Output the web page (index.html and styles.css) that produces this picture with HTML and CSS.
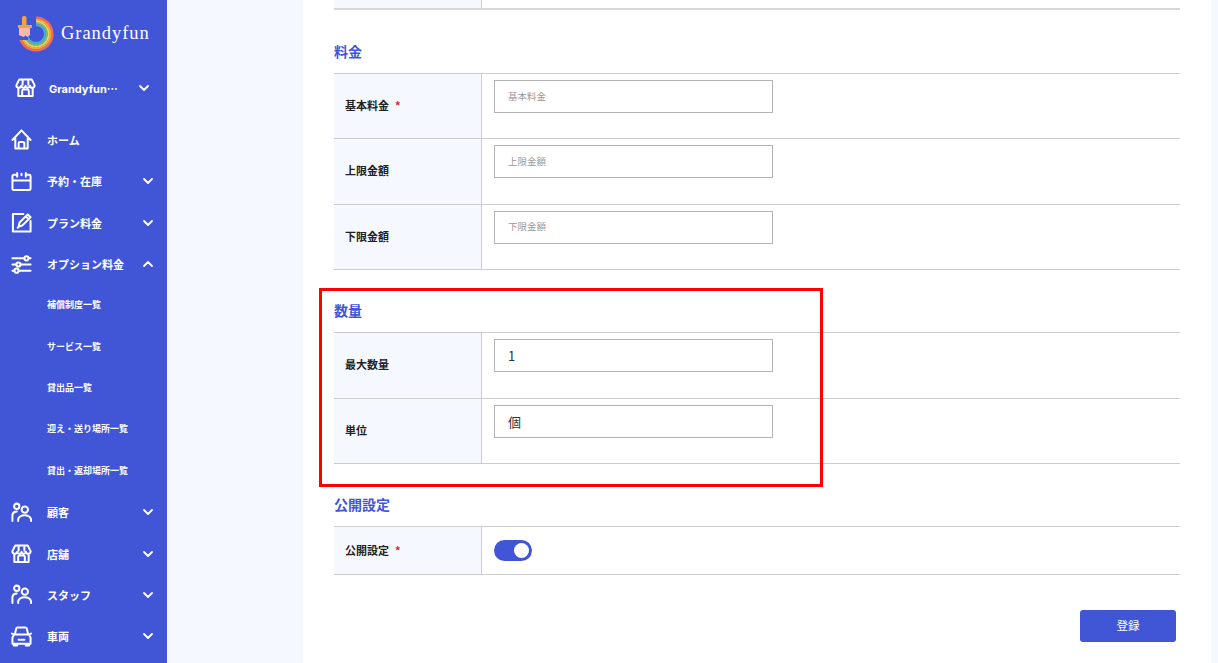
FILE: index.html
```html
<!DOCTYPE html>
<html lang="ja">
<head>
<meta charset="utf-8">
<title>Grandyfun</title>
<link rel="stylesheet" href="styles.css">
</head>
<body>
<svg class="defs" width="0" height="0" aria-hidden="true">
  <symbol id="i-store" viewBox="0 0 22 22"><path d="M4.500 2.500h13l3 6a2.400 2.400 0 0 1-4.800.8 2.400 2.400 0 0 1-4.700 0 2.400 2.400 0 0 1-4.700 0 2.400 2.400 0 0 1-4.800-.8zM3.500 11.500v8.500h15v-8.500M7.500 20v-5.500a1.500 1.500 0 0 1 1.500-1.500h4a1.500 1.500 0 0 1 1.500 1.500V20M8 3v5M14 3v5"/></symbol>
  <symbol id="i-home" viewBox="0 0 22 22"><path d="M1.500 11.500 11 1.500l9.500 10M4.500 9.500V20.500h13V9.500M8 20.500v-5.500a1.500 1.500 0 0 1 1.500-1.500h3a1.500 1.500 0 0 1 1.500 1.500v5.500"/></symbol>
  <symbol id="i-cal" viewBox="0 0 22 22"><path d="M6.500 4H3a1.500 1.500 0 0 0-1.500 1.500v13A1.500 1.500 0 0 0 3 20h16a1.500 1.500 0 0 0 1.500-1.500v-13A1.500 1.500 0 0 0 19 4h-3.500M6.500 2v4M15.500 2v4M11 3v1.500M1.500 10h19"/></symbol>
  <symbol id="i-edit" viewBox="0 0 22 22"><path d="M13 2H2v18.500h18.500V9.500M8 15.500l1-4.500 8.500-8.500 3 3-8.500 8.500zM8 15.500l-1 1M15.500 4.500l3 3"/></symbol>
  <symbol id="i-sliders" viewBox="0 0 22 22"><path d="M1.500 4.500h12.500M18.500 4.500h2M1.500 11h4M10 11h10.500M1.500 17.500h2M8 17.500h12.500"/><circle cx="16.200" cy="4.500" r="2.200"/><circle cx="7.800" cy="11" r="2.200"/><circle cx="5.800" cy="17.500" r="2.200"/></symbol>
  <symbol id="i-people" viewBox="0 0 22 22"><circle cx="6" cy="4.500" r="2.800"/><circle cx="14.500" cy="8" r="3.300"/><path d="M1.500 20v-6.500a4.500 4.500 0 0 1 4.500-3.500M7.500 20v-2a7 5.500 0 0 1 13.500 0V20"/></symbol>
  <symbol id="i-car" viewBox="0 0 22 22"><path d="M4 9 5.500 2.500A1.500 1.500 0 0 1 7 1.500h8a1.500 1.500 0 0 1 1.500 1L18 9M1 8l3 1h14l3-1M3 9.500 1.500 12v6.500h19V12L19 9.500M3 18.500v2h3.500v-2M15.500 18.500v2H19v-2M8 14.500h1M10.500 14.500h1M13 14.500h1"/></symbol>
  <symbol id="i-down" viewBox="0 0 10 6"><path d="M1 1l4 4 4-4"/></symbol>
  <symbol id="i-up" viewBox="0 0 10 6"><path d="M1 5l4-4 4 4"/></symbol>
</svg>

<div class="app">
  <aside class="sidebar">
    <div class="brand">
      <svg class="brand-logo" viewBox="0 0 40 40" width="40" height="40" fill="none" aria-hidden="true">
        <circle cx="20" cy="20" r="16.400" stroke="#ef6a5a" stroke-width="2.400"/>
        <circle cx="20" cy="20" r="14.300" stroke="#f7a63f" stroke-width="2"/>
        <circle cx="20" cy="20" r="12.500" stroke="#f3d648" stroke-width="1.800"/>
        <circle cx="20" cy="20" r="10.800" stroke="#7cbf6a" stroke-width="1.800"/>
        <circle cx="20" cy="20" r="9" stroke="#4aa9e0" stroke-width="2"/>
        <path d="M0 0h20v18H12V26H0z" fill="#4056d6"/>
        <rect x="6" y="2" width="4.500" height="10" rx="1.800" fill="#f0a23c"/>
        <rect x="2" y="11" width="14" height="3" fill="#f0a23c"/>
        <path d="M3 14h11v7l-2.500 2-2-1.500-2 1.500-4.500-2z" fill="#f8b9ab"/>
      </svg>
      <span class="brand-name">Grandyfun</span>
    </div>

    <div class="store-select">
      <svg class="icon"><use href="#i-store"/></svg>
      <span class="store-name">Grandyfun<span class="dots">⋯</span></span>
      <svg class="chev"><use href="#i-down"/></svg>
    </div>

    <nav class="nav">
      <a class="nav-item"><svg class="icon"><use href="#i-home"/></svg><span>ホーム</span></a>
      <a class="nav-item"><svg class="icon"><use href="#i-cal"/></svg><span>予約・在庫</span><svg class="chev"><use href="#i-down"/></svg></a>
      <a class="nav-item"><svg class="icon"><use href="#i-edit"/></svg><span>プラン料金</span><svg class="chev"><use href="#i-down"/></svg></a>
      <a class="nav-item"><svg class="icon"><use href="#i-sliders"/></svg><span>オプション料金</span><svg class="chev"><use href="#i-up"/></svg></a>
      <a class="nav-item nav-sub"><span>補償制度一覧</span></a>
      <a class="nav-item nav-sub"><span>サービス一覧</span></a>
      <a class="nav-item nav-sub"><span>貸出品一覧</span></a>
      <a class="nav-item nav-sub"><span>迎え・送り場所一覧</span></a>
      <a class="nav-item nav-sub"><span>貸出・返却場所一覧</span></a>
      <a class="nav-item"><svg class="icon"><use href="#i-people"/></svg><span>顧客</span><svg class="chev"><use href="#i-down"/></svg></a>
      <a class="nav-item"><svg class="icon"><use href="#i-store"/></svg><span>店舗</span><svg class="chev"><use href="#i-down"/></svg></a>
      <a class="nav-item"><svg class="icon"><use href="#i-people"/></svg><span>スタッフ</span><svg class="chev"><use href="#i-down"/></svg></a>
      <a class="nav-item"><svg class="icon"><use href="#i-car"/></svg><span>車両</span><svg class="chev"><use href="#i-down"/></svg></a>
    </nav>
  </aside>

  <main class="main">
    <div class="panel">
      <div class="form-table form-table-cut">
        <div class="row row-cut"><div class="label"></div><div class="field"></div></div>
      </div>

      <section class="section">
        <h2 class="section-title">料金</h2>
        <div class="form-table">
          <div class="row"><div class="label">基本料金<span class="req">*</span></div><div class="field"><input class="input input-empty" placeholder="基本料金"></div></div>
          <div class="row"><div class="label">上限金額</div><div class="field"><input class="input input-empty" placeholder="上限金額"></div></div>
          <div class="row"><div class="label">下限金額</div><div class="field"><input class="input input-empty" placeholder="下限金額"></div></div>
        </div>
      </section>

      <section class="section">
        <h2 class="section-title">数量</h2>
        <div class="form-table">
          <div class="row"><div class="label">最大数量</div><div class="field"><input class="input" value="1"></div></div>
          <div class="row"><div class="label">単位</div><div class="field"><input class="input" value="個"></div></div>
        </div>
      </section>

      <section class="section">
        <h2 class="section-title">公開設定</h2>
        <div class="form-table">
          <div class="row row-short"><div class="label">公開設定<span class="req">*</span></div><div class="field field-center"><span class="toggle"><span class="knob"></span></span></div></div>
        </div>
      </section>

      <div class="actions"><button class="btn" type="button">登録</button></div>

      <div class="highlight"></div>
    </div>
  </main>
</div>
</body>
</html>
```

FILE: styles.css
```css
* { box-sizing: border-box; }

html, body {
  margin: 0;
  height: 100%;
  overflow: hidden;
}

body {
  background: #f5f8ff;
  color: #222;
  font-family: "Noto Sans CJK JP", "Noto Sans", sans-serif;
}

.defs { position: absolute; }

.app {
  display: flex;
  height: 663px;
}

/* Sidebar */
.sidebar {
  flex: 0 0 167px;
  background: #4056d6;
  color: #fff;
}

.brand {
  display: flex;
  align-items: flex-start;
  gap: 5px;
  height: 67px;
  padding: 14px 0 0 16px;
}

.brand-logo { flex: none; }

.brand-name {
  margin-top: 7px;
  font-family: "Liberation Serif", serif;
  font-size: 18.500px;
  line-height: 24px;
  letter-spacing: 0.950px;
}

.store-select {
  display: flex;
  align-items: center;
  height: 41px;
  padding: 0 18px 0 15px;
  margin-bottom: 11.300px;
}

.store-select .icon { margin-right: 13px; }

.store-name {
  font-family: Inter, "Noto Sans", sans-serif;
  font-size: 11px;
  font-weight: 700;
}

.dots { font-family: "Noto Sans CJK JP", sans-serif; }

.store-select .chev { margin-left: auto; }

.nav { display: block; }

.nav-item {
  display: flex;
  align-items: center;
  height: 41.360px;
  padding: 0 14px 0 11px;
  font-size: 11px;
  font-weight: 700;
  line-height: 16px;
}

.nav-sub {
  padding-left: 47px;
  font-size: 9px;
}

.icon {
  flex: none;
  width: 21px;
  height: 21px;
  margin-right: 15px;
  fill: none;
  stroke: #fff;
  stroke-width: 2.100;
  stroke-linecap: round;
  stroke-linejoin: round;
}

.chev {
  flex: none;
  width: 10px;
  height: 6px;
  margin-left: auto;
  fill: none;
  stroke: #fff;
  stroke-width: 1.800;
  stroke-linecap: round;
  stroke-linejoin: round;
}

/* Main */
.main {
  flex: 1;
  min-width: 0;
  padding: 0 7px 0 136px;
}

.panel {
  position: relative;
  height: 663px;
  background: #fff;
  padding: 0 31px;
}

.form-table { border-top: 1px solid #ccc; }

.form-table-cut { border-top: 0; }

.row {
  display: grid;
  grid-template-columns: 148px 1fr;
  height: 65.330px;
  border-bottom: 1px solid #ccc;
}

.row-cut {
  height: 10px;
  border-bottom: 2px solid #d6d6d6;
}

.row-short { height: 48px; }

.label {
  display: flex;
  align-items: center;
  padding: 0 0 2px 11px;
  background: #f5f8ff;
  border-right: 1px solid #ccc;
  font-size: 11px;
  font-weight: 700;
  color: #222;
}

.req {
  margin-left: 6px;
  color: #f0142f;
}

.field { padding: 6px 0 0 12px; }

.field-center {
  display: flex;
  align-items: center;
  padding-top: 0;
}

.section { margin-top: 31.300px; }

.section:first-of-type { margin-top: 32px; }

.section-title {
  margin: 0 0 11px;
  padding-bottom: 2px;
  height: 20px;
  color: #4056d6;
  font-size: 14px;
  font-weight: 700;
  line-height: 18px;
}

.input {
  display: block;
  width: 279px;
  height: 33px;
  padding: 0 13px;
  border: 1px solid #b3b3b3;
  border-radius: 0;
  background: #fff;
  outline: 0;
  color: #333;
  font-family: inherit;
  font-size: 13px;
}

.input-empty { font-size: 9.500px; padding-bottom: 2px; }

.input::placeholder {
  color: #999;
  opacity: 1;
}

.toggle {
  display: flex;
  align-items: center;
  justify-content: flex-end;
  width: 38px;
  height: 21px;
  padding-right: 3px;
  border-radius: 11px;
  background: #4056d6;
}

.knob {
  width: 15px;
  height: 15px;
  border-radius: 50%;
  background: #fff;
}

.actions {
  display: flex;
  justify-content: flex-end;
  margin-top: 35px;
  padding-right: 4px;
}

.btn {
  width: 96px;
  height: 32px;
  padding: 0 0 3px;
  border: 0;
  border-radius: 3px;
  background: #4056d6;
  color: #fff;
  font-family: inherit;
  font-size: 11.500px;
}

/* Annotation box over the form */
.highlight {
  position: absolute;
  left: 16px;
  top: 288px;
  width: 504px;
  height: 199px;
  border: 3px solid #f00;
  pointer-events: none;
}
```
